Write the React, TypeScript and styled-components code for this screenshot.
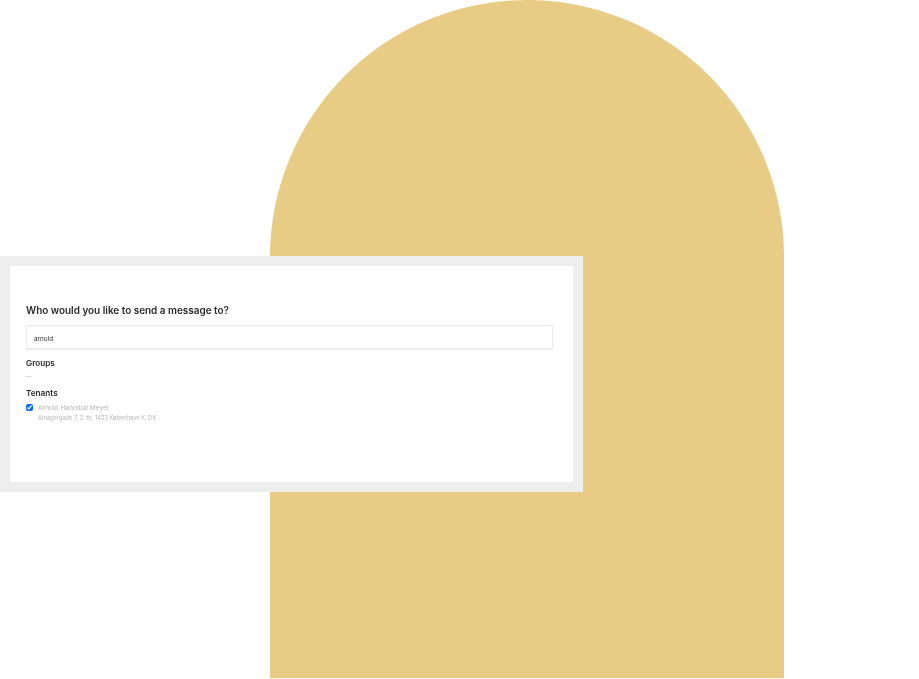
import styled, { createGlobalStyle } from "styled-components";

const GlobalStyle = createGlobalStyle`
    html, body {
        margin: 0;
        padding: 0;
        background: #fff;
    }
    body {
        font-family: "Inter", "Liberation Sans", sans-serif;
        overflow: hidden;
    }
`;

export default function App() {
    return (
        <Stage>
            <GlobalStyle />
            <Arch />
            <Card>
                <Heading>Who would you like to send a message to?</Heading>
                <SearchInput type="text" defaultValue="arnold" />
                <SectionTitle>Groups</SectionTitle>
                <Empty>--</Empty>
                <SectionTitle>Tenants</SectionTitle>
                <TenantRow>
                    <Check type="checkbox" defaultChecked />
                    <TenantText>
                        <TenantName>Arnold Hannibal Meyer</TenantName>
                        <TenantAddress>Amagergade 7, 2. th, 1423 København K, DK</TenantAddress>
                    </TenantText>
                </TenantRow>
            </Card>
        </Stage>
    );
}

const Stage = styled.div`
    position: relative;
    width: 919px;
    height: 679px;
    padding-left: 270px;
    box-sizing: border-box;
    overflow: hidden;
`;

const Arch = styled.div`
    width: 513.5px;
    height: 678px;
    background: #e8cb84;
    border-radius: 257px 257px 0 0;
`;

const Card = styled.div`
    position: absolute;
    left: 0;
    top: 256px;
    width: 583px;
    height: 236px;
    box-sizing: border-box;
    border: 10px solid #eeeeee;
    background: #fff;
    padding: 37px 20px 0 16px;
    color: #2a2a2a;
`;

const Heading = styled.h2`
    margin: 0 0 8px;
    font-size: 9.95px;
    line-height: 14px;
    font-weight: 600;
    filter: blur(0.25px);
`;

const SearchInput = styled.input`
    display: block;
    width: 100%;
    height: 25px;
    box-sizing: border-box;
    margin-bottom: 8px;
    padding: 3px 7px 0;
    border: 1px solid #eaeaea;
    border-bottom-width: 2px;
    border-radius: 2px;
    outline: none;
    font-family: inherit;
    font-size: 6.4px;
    color: #333;
    filter: blur(0.2px);
`;

const SectionTitle = styled.h3`
    margin: 0;
    font-size: 8.2px;
    line-height: 10px;
    font-weight: 600;
    filter: blur(0.25px);
`;

const Empty = styled.div`
    margin: 4px 0 8px;
    font-size: 6px;
    line-height: 8px;
    color: #999;
    filter: blur(0.25px);
`;

const TenantRow = styled.label`
    display: flex;
    align-items: flex-start;
    gap: 5px;
    margin-top: 5px;
`;

const Check = styled.input`
    width: 7px;
    height: 7px;
    margin: 1px 0 0;
    accent-color: #0a6cf5;
`;

const TenantText = styled.div`
    display: flex;
    flex-direction: column;
    gap: 1px;
    padding-top: 1px;
    filter: blur(0.25px);
`;

const TenantName = styled.span`
    font-size: 6.6px;
    line-height: 9px;
    color: #b5b5b5;
`;

const TenantAddress = styled.span`
    font-size: 5.7px;
    line-height: 8px;
    color: #b5b5b5;
`;
